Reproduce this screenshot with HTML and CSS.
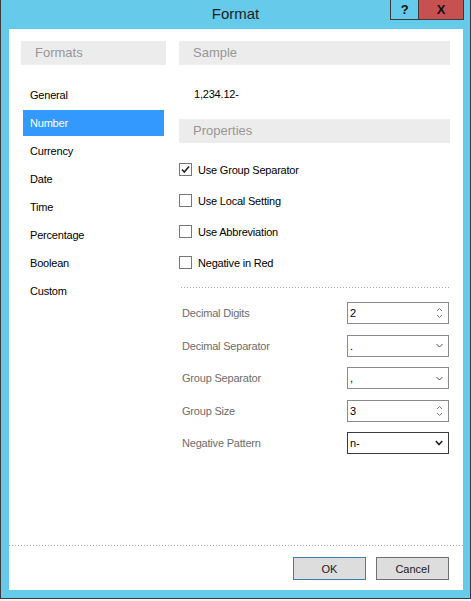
FILE: index.html
```html
<!DOCTYPE html>
<html lang="en">
  <head>
    <meta charset="UTF-8" />
    <title>Format</title>
    <link rel="stylesheet" href="styles.css">
  </head>
  <body>
    <div class="window">
      <div class="titlebar">
        <span class="title">Format</span>
        <div class="controls">
          <span class="ctl help">?</span>
          <span class="ctl close">X</span>
        </div>
      </div>
      <div class="client">
        <div class="main">
          <section class="formats">
            <div class="group-head">Formats</div>
            <ul class="format-list">
              <li>General</li>
              <li class="selected">Number</li>
              <li>Currency</li>
              <li>Date</li>
              <li>Time</li>
              <li>Percentage</li>
              <li>Boolean</li>
              <li>Custom</li>
            </ul>
          </section>
          <section class="props">
            <div class="group-head">Sample</div>
            <div class="sample">1,234.12-</div>
            <div class="group-head">Properties</div>
            <div class="checks">
              <div class="check">
                <span class="box">
                  <svg width="11" height="11" viewBox="0 0 11 11"><path d="M2 5.5 L4.3 8 L9 2.5" fill="none" stroke="#222" stroke-width="1.6"/></svg>
                </span>
                Use Group Separator
              </div>
              <div class="check"><span class="box"></span>Use Local Setting</div>
              <div class="check"><span class="box"></span>Use Abbreviation</div>
              <div class="check"><span class="box"></span>Negative in Red</div>
            </div>
            <div class="sep"></div>
            <div class="fields">
              <div class="field">
                <span class="label">Decimal Digits</span>
                <span class="input">2
                  <svg class="spin" width="7" height="12" viewBox="0 0 7 12"><path d="M1 4 L3.5 1.5 L6 4 M1 8 L3.5 10.5 L6 8" fill="none" stroke="#777" stroke-width="1"/></svg>
                </span>
              </div>
              <div class="field">
                <span class="label">Decimal Separator</span>
                <span class="input">.
                  <svg class="drop" width="7" height="5" viewBox="0 0 7 5"><path d="M0.5 1 L3.5 4 L6.5 1" fill="none" stroke="#555" stroke-width="1"/></svg>
                </span>
              </div>
              <div class="field">
                <span class="label">Group Separator</span>
                <span class="input">,
                  <svg class="drop" width="7" height="5" viewBox="0 0 7 5"><path d="M0.5 1 L3.5 4 L6.5 1" fill="none" stroke="#555" stroke-width="1"/></svg>
                </span>
              </div>
              <div class="field">
                <span class="label">Group Size</span>
                <span class="input">3
                  <svg class="spin" width="7" height="12" viewBox="0 0 7 12"><path d="M1 4 L3.5 1.5 L6 4 M1 8 L3.5 10.5 L6 8" fill="none" stroke="#777" stroke-width="1"/></svg>
                </span>
              </div>
              <div class="field">
                <span class="label">Negative Pattern</span>
                <span class="input focused">n-
                  <svg class="drop" width="8" height="6" viewBox="0 0 8 6"><path d="M0.8 1 L4 4.5 L7.2 1" fill="none" stroke="#222" stroke-width="1.6"/></svg>
                </span>
              </div>
            </div>
          </section>
        </div>
        <div class="footer">
          <button class="btn default">OK</button>
          <button class="btn">Cancel</button>
        </div>
      </div>
    </div>
    <div class="desk"></div>
  </body>
</html>
```

FILE: styles.css
```css
html,
body {
  margin: 0;
  padding: 0;
}

body {
  height: 601px;
  overflow: hidden;
  background: #fff;
  font-family: "Liberation Sans", Arial, sans-serif;
  font-size: 11px;
  letter-spacing: -0.2px;
  color: #000;
}

.window {
  width: 471px;
  height: 599px;
  box-sizing: border-box;
  display: flex;
  flex-direction: column;
  padding: 0 7px 8px 8px;
  background: #66cbea;
  border: 1px solid #3b3b3b;
  border-top: none;
}

.titlebar {
  position: relative;
  height: 29px;
  margin: 0 -7px 0 -8px;
  text-align: center;
}

.title {
  display: inline-block;
  padding-top: 5px;
  font-size: 15px;
  line-height: 18px;
  letter-spacing: 0;
  color: #1e1e1e;
}

.controls {
  position: absolute;
  top: 0;
  right: 6px;
  display: flex;
}

.ctl {
  height: 19px;
  line-height: 19px;
  text-align: center;
  font-weight: bold;
  font-size: 13px;
  color: #111;
  border-bottom: 1px solid #3b3b3b;
  border-left: 1px solid #3b3b3b;
}

.help {
  width: 27px;
}

.close {
  width: 44px;
  background: #c75050;
  border-right: 1px solid #3b3b3b;
}

.client {
  flex: 1;
  display: flex;
  flex-direction: column;
  background: #fff;
}

.main {
  flex: 1;
  display: grid;
  grid-template-columns: 145px 271px;
  column-gap: 13px;
  padding: 12px 12px 0;
  align-items: start;
}

.group-head {
  height: 24px;
  line-height: 24px;
  padding-left: 14px;
  background: #ececec;
  color: #979797;
  font-size: 13px;
  letter-spacing: 0;
}

.format-list {
  list-style: none;
  margin: 17px 2px 0;
  padding: 0;
  display: flex;
  flex-direction: column;
  gap: 2px;
}

.format-list li {
  height: 26px;
  line-height: 26px;
  padding-left: 7px;
}

.format-list li.selected {
  background: #3399ff;
  color: #fff;
}

.sample {
  padding: 21px 0 17px 15px;
  line-height: 16px;
}

.checks {
  margin-top: 11px;
}

.check {
  height: 31px;
  display: flex;
  align-items: center;
  gap: 6px;
}

.box {
  width: 11px;
  height: 11px;
  border: 1px solid #777;
  background: #fff;
  display: flex;
}

.sep {
  height: 1px;
  margin: 9px 0 0 2px;
  background: repeating-linear-gradient(to right, #a8a8a8 0 1px, transparent 1px 3px);
}

.fields {
  margin-top: 14px;
  display: flex;
  flex-direction: column;
  gap: 10.5px;
}

.field {
  display: flex;
  align-items: center;
  justify-content: space-between;
  padding-left: 3px;
  padding-right: 1px;
}

.label {
  color: #6d6d6d;
}

.input {
  box-sizing: border-box;
  width: 102px;
  height: 22px;
  display: flex;
  align-items: center;
  justify-content: space-between;
  padding: 0 5px 0 2px;
  border: 1px solid #8a8a8a;
}

.input.focused {
  border-color: #3b3b3b;
}

.footer {
  display: flex;
  justify-content: flex-end;
  gap: 10px;
  padding: 12px 14px 10px;
  background: repeating-linear-gradient(to right, #a8a8a8 0 1px, transparent 1px 3px) top left / 100% 1px no-repeat;
}

.btn {
  width: 73px;
  height: 23px;
  padding: 0;
  font-family: "Liberation Sans", Arial, sans-serif;
  font-size: 11px;
  color: #1a1a1a;
  background: #dddddd;
  border: 1px solid #707070;
  border-radius: 0;
}

.btn.default {
  border-color: #3c7fb1;
}

.desk {
  height: 2px;
  background: #f3f3f3;
}
```
